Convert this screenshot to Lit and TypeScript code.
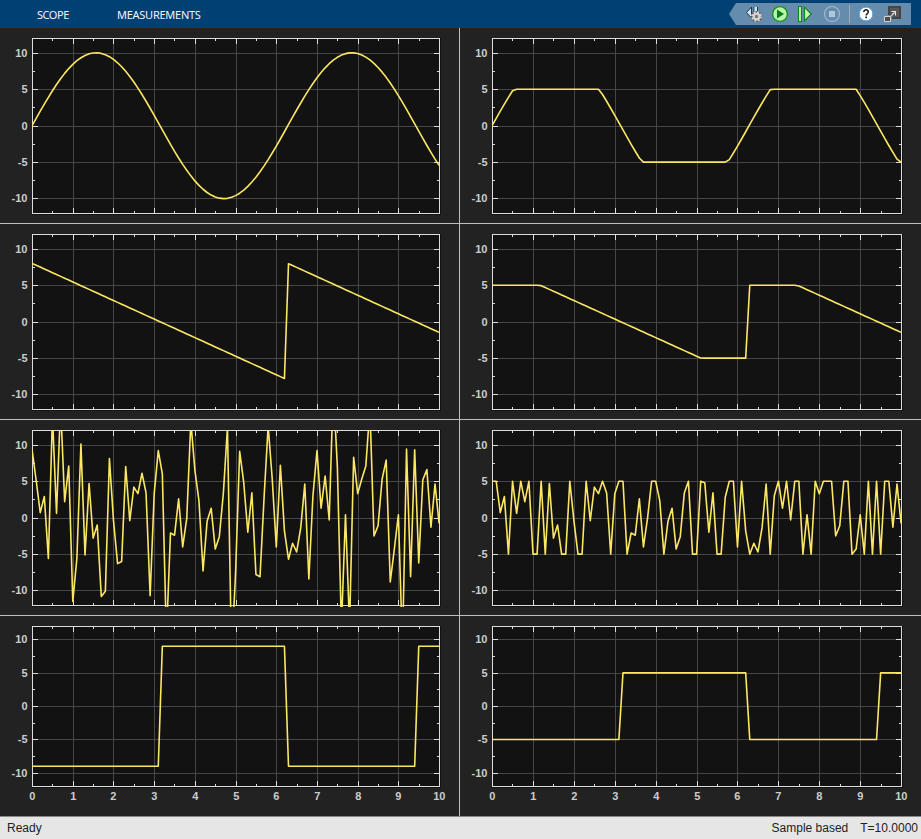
import { LitElement, html, svg, css } from "lit";
import { customElement, property } from "lit/decorators.js";

const STEPS = Array.from({ length: 101 }, (_, i) => i);
const clamp = (v: number) => Math.max(-5, Math.min(5, v));

const sine = STEPS.map((i) => 10 * Math.sin(i / 10));
const sawtooth = STEPS.map((i) => 8 - (16 * ((i / 10) % (2 * Math.PI))) / (2 * Math.PI));
const square = STEPS.map((i) => (Math.sin(i / 10) >= 0 ? -9 : 9));
const noise = [
  9.3, 5.1, 0.7, 2.9, -5.6, 14, 0.6, 15.5, 2.2, 7.1,
  -11.5, -5.6, 10.1, -5.1, 4.7, -2.8, -1, -10.8, -10.1, 8.1,
  -0.4, -6.3, -6, 7, -0.4, 4.2, 3.3, 6.1, 3.4, -10.7,
  3.3, 9.2, 6, -16.5, -2.1, -2.4, 2.6, -4, -0.1, 13.2,
  6.5, 2.3, -7.3, -0.5, 1.3, -4.3, -2.6, 3.4, 12.4, -19,
  -7.5, 9.1, 4.8, -2, 3.4, -7.8, -8.1, 2.8, 12.6, 5.3,
  -4, 7.2, -1.8, -5.7, -3.5, -4.7, -1.4, 4.6, -8.4, 3,
  9.2, 1.3, 5.7, -0.3, 18, 7, -15, 0.4, -15, 8.3,
  3.3, 5.3, 7.1, 15, -2.5, -1.1, 5.3, 7.9, -8.8, -4.3,
  0.4, -18, 9.4, -8.1, 9.3, -6.2, 5.2, 6.6, -1.3, 4.6, -0.8,
];

@customElement("scope-plot")
export class ScopePlot extends LitElement {
  @property({ attribute: false }) data: number[] = [];
  @property({ type: Number }) plotWidth = 407;
  @property({ type: Number }) plotHeight = 175;
  @property({ type: Boolean }) axis = false;

  static styles = css`
    :host { display: block; background: #222222; overflow: hidden; }
    svg { display: block; width: 100%; height: 100%; }
    .field { fill: #121212; }
    .grid { fill: #464646; }
    .frame { fill: #dcdcdc; }
    .trace { fill: none; stroke: #fbe763; stroke-width: 1.6; stroke-linejoin: round; }
    text { font: bold 11px "Liberation Sans", Arial, sans-serif; fill: #cccccc; }
    .end { text-anchor: end; }
    .mid { text-anchor: middle; }
  `;

  render() {
    const L = 32, T = 10, W = this.plotWidth, H = this.plotHeight;
    const px = (t: number) => L + Math.round((t * W) / 10);
    const py = (v: number) => T + Math.round(((12 - v) * H) / 24);
    const box = (x: number, y: number, w: number, h: number, c: string) =>
      svg`<rect class=${c} x=${x} y=${y} width=${w} height=${h}></rect>`;
    const xs = [0, 1, 2, 3, 4, 5, 6, 7, 8, 9, 10];
    const ys = [10, 5, 0, -5, -10];
    const points = this.data
      .map((v, i) => `${(L + 0.1 + (i * W) / 100).toFixed(2)},${(T + 0.2 + ((12 - v) * H) / 24).toFixed(2)}`)
      .join(" ");
    return html`<svg>
      <clipPath id="area"><rect x=${L} y=${T} width=${W + 1} height=${H + 2}></rect></clipPath>
      ${box(L, T, W + 2, H + 2, "field")}
      ${xs.slice(1, 10).map((t) => box(px(t), T, 1, H, "grid"))}
      ${ys.map((v) => box(L, py(v), W, 1, "grid"))}
      ${xs.slice(1, 10).map((t) => [box(px(t), T, 1, 6, "frame"), box(px(t), T + H - 5, 1, 6, "frame")])}
      ${xs.slice(0, 10).map((t) => [box(px(t + 0.5), T, 1, 3, "frame"), box(px(t + 0.5), T + H - 2, 1, 3, "frame")])}
      ${ys.map((v) => [box(L, py(v), 6, 1, "frame"), box(L + W - 5, py(v), 6, 1, "frame")])}
      ${[7.5, 2.5, -2.5, -7.5].map((v) => [box(L, py(v), 3, 1, "frame"), box(L + W - 2, py(v), 3, 1, "frame")])}
      ${box(L, T, W + 1, 1, "frame")}${box(L, T + H, W + 1, 1, "frame")}
      ${box(L, T, 1, H + 1, "frame")}${box(L + W, T, 1, H + 1, "frame")}
      <polyline class="trace" clip-path="url(#area)" points=${points}></polyline>
      ${ys.map((v) => svg`<text class="end" x="27.5" y=${py(v) + 4}>${v}</text>`)}
      ${this.axis ? xs.map((t) => svg`<text class="mid" x=${px(t) + 0.3} y=${T + H + 14}>${t}</text>`) : ""}
    </svg>`;
  }
}

@customElement("app-root")
export class AppRoot extends LitElement {
  static styles = css`
    :host { display: flex; flex-direction: column; height: 839px; background: #222222; }
    header {
      height: 28px; flex: none; box-sizing: border-box; background: #004073; display: flex;
      align-items: center; justify-content: space-between; padding: 0 10px 0 37px;
      color: #f0f4f8; font: 11px/28px "Noto Sans", "Open Sans", sans-serif;
    }
    nav { display: flex; gap: 48px; height: 28px; line-height: 29px; }
    .tab { white-space: nowrap; }
    .scope { width: 32px; letter-spacing: -0.45px; }
    .measure { letter-spacing: -0.26px; }
    .tools {
      width: 182px; height: 22px; box-sizing: border-box; display: flex; align-items: center;
      padding-left: 16px; background: #668cad; clip-path: polygon(7px 0, 100% 0, 100% 100%, 7px 100%, 0 50%);
    }
    .tools svg { width: 18px; height: 18px; flex: none; }
    .g8 { margin-left: 8px; }
    .g7 { margin-left: 7px; }
    .g9 { margin-left: 9px; }
    .sep { width: 1px; height: 18px; margin: 0 7px 0 8px; background: #a3abb1; }
    main { flex: none; display: grid; grid-template-columns: 459px 461px; grid-template-rows: 195px 195px 195px 200px; gap: 1px; background: #bfbfbf; }
    footer {
      height: 23px; flex: none; box-sizing: border-box; border-top: 1px solid #8a8787; background: #e6e6e6;
      display: flex; align-items: center; padding: 0 3px 0 7px; color: #222;
      font: 12px/22px "Liberation Sans", Arial, sans-serif;
    }
    .mode { margin-left: auto; margin-right: 12px; }
  `;

  render() {
    const signals = [sine, sawtooth, noise, square];
    return html`
      <header>
        <nav><span class="tab scope">SCOPE</span><span class="tab measure">MEASUREMENTS</span></nav>
        <div class="tools">
          <svg viewBox="0 0 18 18">
            <path d="M1.5 7.5 6.5 2v11z" fill="#c9e7fb" stroke="#26323d"></path>
            <path d="M9 2v6M12.5 2v6" stroke="#26323d"></path>
            <path d="M9.5 2h2.5v6H9.5z" fill="#c9e7fb"></path>
            <circle cx="11.5" cy="11.5" r="4.4" fill="none" stroke="#555" stroke-width="2.4"></circle>
            <circle cx="11.5" cy="11.5" r="4.4" fill="none" stroke="#d4d4d4" stroke-width="1.9" stroke-dasharray="2 1.456"></circle>
            <circle cx="11.5" cy="11.5" r="2.8" fill="#777" stroke="#d4d4d4" stroke-width="2.2"></circle>
          </svg>
          <svg class="g8" viewBox="0 0 18 18">
            <circle cx="9" cy="9" r="7.4" fill="#b9f5a9" stroke="#159126" stroke-width="1.4"></circle>
            <path d="M6 4.5 13 9l-7 4.5z" fill="#067d1b"></path>
          </svg>
          <svg class="g7" viewBox="0 0 18 18">
            <path d="M2.5 1.5h3v15h-3zM8.5 2.2v13.6l6.7-6.8z" fill="#c3f8b3" stroke="#07891f" stroke-width="1.2"></path>
          </svg>
          <svg class="g9" viewBox="0 0 18 18">
            <circle cx="9" cy="9" r="7.5" fill="none" stroke="#a1b9cc" stroke-width="1.2"></circle>
            <rect x="6" y="6" width="6" height="6" fill="#b3c6d6"></rect>
          </svg>
          <span class="sep"></span>
          <svg viewBox="0 0 18 18">
            <circle cx="9" cy="9" r="6.9" fill="#fff" stroke="#4b9bdc" stroke-width="1"></circle>
            <path d="M6.8 7c0-3.1 4.7-2.8 4.5 0-.1 1.6-2.1 1.5-2.1 3.4" fill="none" stroke="#222" stroke-width="1.6"></path>
            <path d="M8.3 11.5H10v1.7H8.3z" fill="#222"></path>
          </svg>
          <svg class="g9" viewBox="0 0 18 18">
            <path d="M4 1h13v13H8v-4H4z" fill="#444"></path>
            <path d="M6 3h9v9H8V9H6z" fill="#565656"></path>
            <path d="M.5 11.5h6v5h-6z" fill="#4b4b4b" stroke="#d4d4d4"></path>
            <path d="M7.5 10.5 10.5 7.5M7.5 6.5h4v4" fill="none" stroke="#e8e8e8" stroke-width="1.1"></path>
          </svg>
        </div>
      </header>
      <main>
        ${signals.map((s, r) => html`
          <scope-plot .data=${s} .plotWidth=${407} .plotHeight=${r === 3 ? 160 : 175} .axis=${r === 3}></scope-plot>
          <scope-plot .data=${s.map(clamp)} .plotWidth=${409} .plotHeight=${r === 3 ? 160 : 175} .axis=${r === 3}></scope-plot>
        `)}
      </main>
      <footer><span>Ready</span><span class="mode">Sample based</span><span>T=10.0000</span></footer>
    `;
  }
}
